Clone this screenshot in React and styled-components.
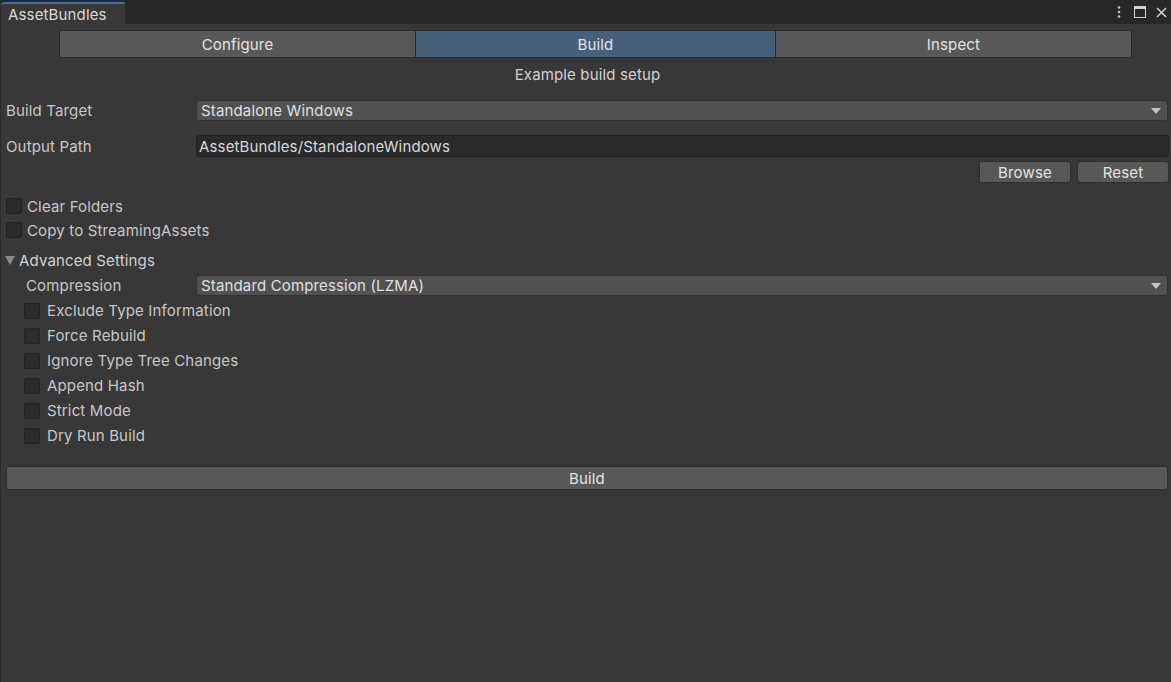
import React from 'react';
import styled, { createGlobalStyle } from 'styled-components';

const GlobalStyle = createGlobalStyle`
  html, body {
    margin: 0;
    padding: 0;
    background: #383838;
  }
  body {
    font-family: Inter, "Noto Sans", sans-serif;
    font-size: 15px;
    letter-spacing: 0.15px;
    color: #d2d2d2;
  }
`;

const Window = styled.div`
  width: 1171px;
  height: 682px;
  display: flex;
  flex-direction: column;
  background: #383838;
  border-left: 1px solid #2c2c2c;
  box-sizing: border-box;
  overflow: hidden;
`;

const TabBar = styled.div`
  height: 24px;
  flex: none;
  display: flex;
  align-items: flex-end;
  background: #282828;
`;

const Tab = styled.div`
  width: 124px;
  height: 22px;
  box-sizing: border-box;
  padding-left: 7px;
  display: flex;
  align-items: center;
  background: #383838;
  border-top: 2px solid #3d72ab;
  border-top-left-radius: 4px;
  border-top-right-radius: 2px;
  color: #d8d8d8;
`;

const TabIcons = styled.div`
  margin-left: auto;
  height: 24px;
  display: flex;
  align-items: center;
  gap: 10px;
  padding-right: 4px;

  & > svg:first-child {
    margin-right: 3px;
  }
`;

const Body = styled.div`
  flex: 1;
  display: flex;
  flex-direction: column;
  align-items: stretch;
  padding: 0 2px 0 5px;
`;

const Toolbar = styled.div`
  margin: 6px 37px 0 53px;
  height: 28px;
  display: grid;
  grid-template-columns: 355px 360px 1fr;
  border: 1px solid #2a2a2a;
  border-radius: 3px;
  overflow: hidden;
  box-sizing: border-box;
`;

const Segment = styled.div`
  display: flex;
  align-items: center;
  justify-content: center;
  background: ${p => (p.$active ? '#46607c' : '#585858')};
  border-left: ${p => (p.$first ? 'none' : '1px solid #2a2a2a')};
  color: #e4e4e4;
`;

const Subtitle = styled.div`
  margin-top: 6px;
  height: 22px;
  line-height: 22px;
  text-align: center;
  color: #d2d2d2;
`;

const FieldRow = styled.div`
  display: flex;
  align-items: center;
  margin-top: ${p => p.$top}px;
  height: ${p => p.$h}px;
  padding-left: ${p => p.$indent || 0}px;
`;

const Label = styled.div`
  width: ${p => p.$w}px;
  flex: none;
  color: #c8c8c8;
`;

const Dropdown = styled.div`
  flex: 1;
  height: 100%;
  box-sizing: border-box;
  display: flex;
  align-items: center;
  padding: 0 6px 0 4px;
  background: #515151;
  border: 1px solid #303030;
  border-radius: 3px;
  color: #e0e0e0;
  margin-right: 1px;
`;

const Arrow = styled.span`
  margin-left: auto;
  width: 0;
  height: 0;
  border-left: 5px solid transparent;
  border-right: 5px solid transparent;
  border-top: 6px solid #c4c4c4;
`;

const TextField = styled.div`
  flex: 1;
  height: 100%;
  box-sizing: border-box;
  display: flex;
  align-items: center;
  padding-left: 2px;
  background: #2a2a2a;
  border: 1px solid #212121;
  border-radius: 3px;
  color: #d8d8d8;
`;

const ButtonRow = styled.div`
  margin-top: 4px;
  height: 22px;
  display: flex;
  justify-content: flex-end;
  gap: 6px;
`;

const Button = styled.div`
  width: ${p => p.$w || 'auto'};
  flex: none;
  height: ${p => p.$h || 22}px;
  margin-top: ${p => p.$top || 0}px;
  box-sizing: border-box;
  display: flex;
  align-items: center;
  justify-content: center;
  background: #585858;
  border: 1px solid #2e2e2e;
  border-radius: 3px;
  color: #e4e4e4;
  margin-right: ${p => p.$right || 0}px;
`;

const ToggleRow = styled.label`
  display: flex;
  align-items: center;
  gap: ${p => p.$gap || 5}px;
  height: ${p => p.$h}px;
  margin-top: ${p => p.$top || 0}px;
  padding-left: ${p => p.$indent || 0}px;
  color: #c8c8c8;
`;

const Box = styled.span`
  width: 16px;
  height: 16px;
  flex: none;
  box-sizing: border-box;
  background: #2b2b2b;
  border: 1px solid #222;
  border-radius: 2px;
`;

const Foldout = styled.div`
  margin-top: 8px;
  height: 20px;
  display: flex;
  align-items: center;
  gap: 4px;
  margin-left: -1px;
  color: #d2d2d2;
`;

const FoldArrow = styled.span`
  width: 0;
  height: 0;
  border-left: 5px solid transparent;
  border-right: 5px solid transparent;
  border-top: 9px solid #8a8a8a;
`;

const Kebab = () => (
  <svg width="4" height="12" viewBox="0 0 4 12">
    <circle cx="2" cy="1.5" r="1.3" fill="#c8c8c8" />
    <circle cx="2" cy="6" r="1.3" fill="#c8c8c8" />
    <circle cx="2" cy="10.5" r="1.3" fill="#c8c8c8" />
  </svg>
);

const Maximize = () => (
  <svg width="12" height="12" viewBox="0 0 12 12">
    <rect x="0.5" y="0.5" width="11" height="11" fill="none" stroke="#d0d0d0" />
    <rect x="0.5" y="0.5" width="11" height="2.5" fill="#d0d0d0" />
  </svg>
);

const Close = () => (
  <svg width="11" height="11" viewBox="0 0 11 11">
    <path d="M1 1 L10 10 M10 1 L1 10" stroke="#d0d0d0" strokeWidth="1.5" />
  </svg>
);

const advanced = [
  'Exclude Type Information',
  'Force Rebuild',
  'Ignore Type Tree Changes',
  'Append Hash',
  'Strict Mode',
  'Dry Run Build',
];

export default function App() {
  return (
    <Window>
      <GlobalStyle />
      <TabBar>
        <Tab>AssetBundles</Tab>
        <TabIcons>
          <Kebab />
          <Maximize />
          <Close />
        </TabIcons>
      </TabBar>
      <Body>
        <Toolbar>
          <Segment $first>Configure</Segment>
          <Segment $active>Build</Segment>
          <Segment>Inspect</Segment>
        </Toolbar>
        <Subtitle>Example build setup</Subtitle>

        <FieldRow $top={14} $h={21}>
          <Label $w={190}>Build Target</Label>
          <Dropdown>
            Standalone Windows
            <Arrow />
          </Dropdown>
        </FieldRow>
        <FieldRow $top={14} $h={22}>
          <Label $w={190}>Output Path</Label>
          <TextField>AssetBundles/StandaloneWindows</TextField>
        </FieldRow>
        <ButtonRow>
          <Button $w="92px">Browse</Button>
          <Button $w="92px">Reset</Button>
        </ButtonRow>

        <ToggleRow $h={24} $top={11}>
          <Box />
          Clear Folders
        </ToggleRow>
        <ToggleRow $h={24}>
          <Box />
          Copy to StreamingAssets
        </ToggleRow>

        <Foldout>
          <FoldArrow />
          Advanced Settings
        </Foldout>
        <FieldRow $top={5} $h={21} $indent={20}>
          <Label $w={170}>Compression</Label>
          <Dropdown>
            Standard Compression (LZMA)
            <Arrow />
          </Dropdown>
        </FieldRow>
        <div style={{ marginTop: 2 }}>
          {advanced.map(name => (
            <ToggleRow key={name} $h={25} $indent={18} $gap={7}>
              <Box />
              {name}
            </ToggleRow>
          ))}
        </div>

        <Button $h={24} $top={18} $right={1}>Build</Button>
      </Body>
    </Window>
  );
}
